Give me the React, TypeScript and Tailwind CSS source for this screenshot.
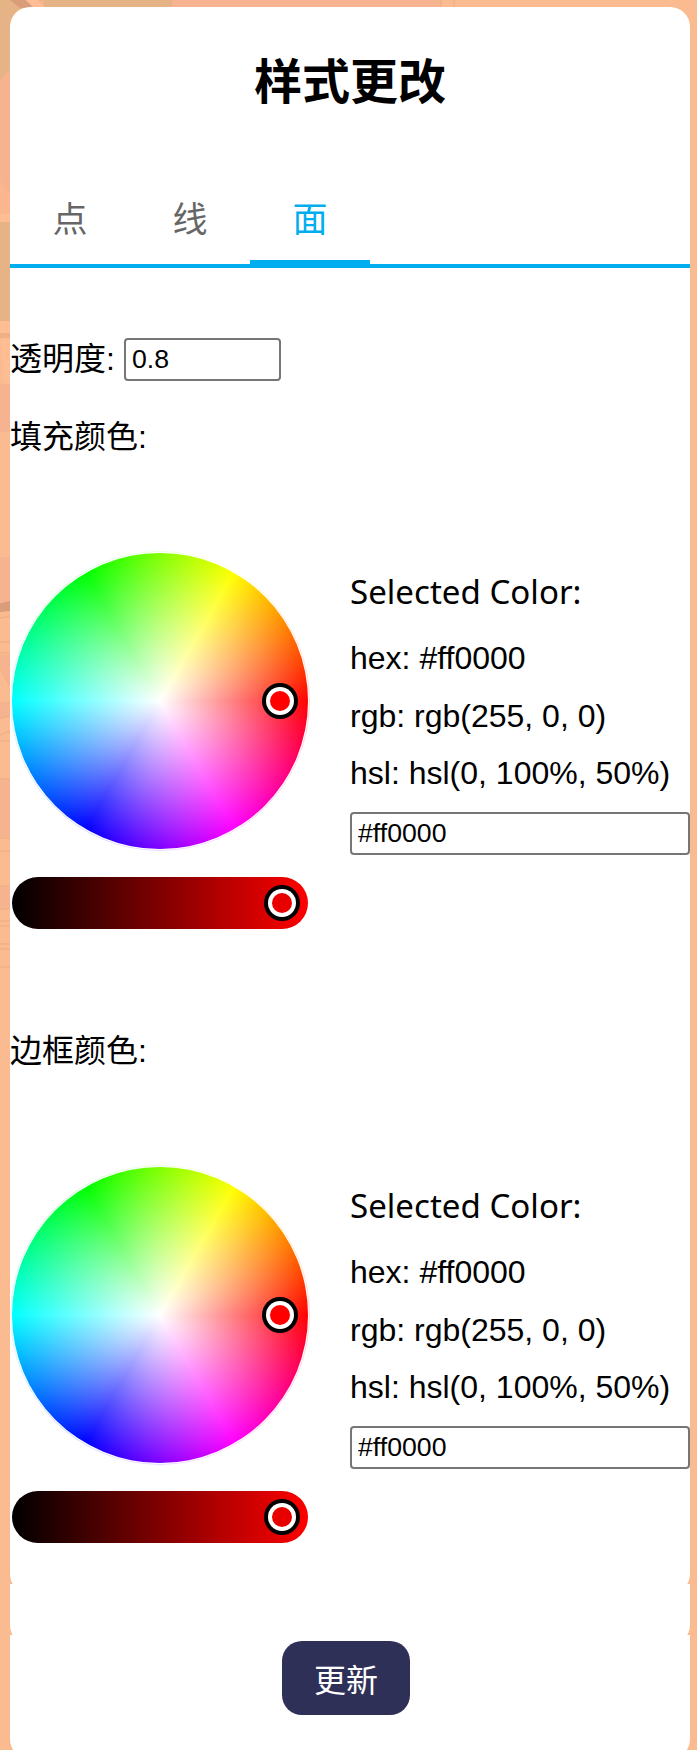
import React from "react";

const cjk = "font-['Liberation_Sans','Noto_Sans_CJK_SC',sans-serif]";

function Backdrop() {
  return (
    <svg className="absolute inset-0" width="697" height="1750" viewBox="0 0 697 1750">
      <rect width="697" height="1750" fill="#fbbb91" />
      <path d="M0 0H440V7H0Z" fill="#f5b38f" />
      <path d="M44 0H172V7H44Z" fill="#e6b386" />
      <path d="M0 0H10L34 8L10 24V80L0 81Z" fill="#e6b386" />
      <path d="M10 0H25L34 8H20Z" fill="#d99d7c" />
      <path d="M27 0H37L46 8H34Z" fill="#ffbd94" />
      <path d="M0 80L10 70V214H0Z" fill="#f5b38f" />
      <path d="M0 180L10 195V214H0Z" fill="#fbb68f" />
      <rect y="214" width="10" height="8" fill="#ffbd94" />
      <path d="M0 222H10V279H0Z" fill="#e6b386" />
      <path d="M0 279H10V321H0Z" fill="#e6b386" />
      <rect y="321" width="10" height="12" fill="#ffbd94" />
      <rect y="333" width="10" height="5" fill="#efb088" />
      <path d="M1 339H10V383L3 381Z" fill="#ffbd94" />
      <rect y="384" width="10" height="48" fill="#f5b38f" />
      <rect y="557" width="10" height="45" fill="#f5b38f" />
      <path d="M0 603L10 601V611L0 612Z" fill="#d99d7c" />
      <path d="M0 655H10V684L0 667Z" fill="#f5b38f" />
      <path d="M0 704H10V716L0 719Z" fill="#f5b38f" />
      <rect y="779" width="10" height="58" fill="#f5b38f" />
      <rect y="886" width="10" height="23" fill="#f5b38f" />
      <path
        d="M0 618L10 616M0 642H10M0 653H10M0 668L10 686M0 703H10M0 718L10 716M0 735L10 731M0 741H10M0 779H10M0 838H10M0 851H10M0 886H10M0 909H10M0 921H10M0 926H10M0 944H10M0 949H10M0 967H10M441 0V7M454 0V7"
        stroke="#efb088"
        strokeWidth="1.5"
      />
    </svg>
  );
}

function Handle({ fill }: { fill: string }) {
  return (
    <svg width="36" height="36" viewBox="0 0 36 36">
      <circle cx="18" cy="18" r="18" fill="#000" />
      <circle cx="18" cy="18" r="14" fill="#fff" />
      <circle cx="18" cy="18" r="10" fill={fill} />
    </svg>
  );
}

function ColorPicker({ label }: { label: string }) {
  return (
    <section className="h-[614px]">
      <div className="h-[48px] pt-[2px] text-[32px] leading-[48px]">{label}</div>
      <div className="flex pt-[92px]">
        <div className="w-[340px] shrink-0">
          <div className="relative h-[300px] w-[300px] rounded-full bg-[conic-gradient(from_90deg,#ffd9d9,#ffd9ff,#d9d9ff,#d9ffff,#d9ffd9,#ffffd9,#ffd9d9)] p-px">
            <div className="rounded-full bg-white p-px">
              <div className="h-[296px] w-[296px] rounded-full bg-[radial-gradient(circle_closest-side,#fff,transparent),conic-gradient(from_90deg,red,magenta,blue,aqua,lime,yellow,red)]" />
            </div>
            <div className="absolute top-[132px] left-[252px]">
              <Handle fill="#ff0000" />
            </div>
          </div>
          <div className="relative mt-[26px] ml-[2px] h-[52px] w-[296px] rounded-full bg-[linear-gradient(to_right,#000,#f00)]">
            <div className="absolute top-[8px] left-[252px]">
              <Handle fill="#e80000" />
            </div>
          </div>
        </div>
        <div className="w-[340px] pt-[12px]">
          <div className="h-[58px] pt-[5px] font-['Noto_Sans',sans-serif] text-[33.1px] leading-[48px] whitespace-nowrap">
            Selected Color:
          </div>
          <div className="pt-[9px] text-[32px] leading-[57.6px] whitespace-nowrap">
            <div>hex: #ff0000</div>
            <div>rgb: rgb(255, 0, 0)</div>
            <div>hsl: hsl(0, 100%, 50%)</div>
          </div>
          <input
            className="mt-[9px] block h-[43px] w-[340px] rounded-[4px] border-2 border-[#767676] bg-white px-[6px] text-[26.67px] text-black"
            defaultValue="#ff0000"
          />
        </div>
      </div>
    </section>
  );
}

export default function App() {
  const tabs = ["点", "线", "面"];
  return (
    <div className={`relative h-[1750px] w-[697px] overflow-hidden text-black ${cjk}`}>
      <Backdrop />
      <main className="relative flex flex-col pt-[7px] pr-[7px] pl-[10px]">
        <div className="h-[1587px] rounded-[20px] bg-white">
          <h1 className="pt-[40px] text-center text-[48px] leading-[72px] font-bold">样式更改</h1>
          <nav className="mt-[56px] flex h-[93px] items-stretch border-b-4 border-[#00aeef]">
            {tabs.map((t, i) => (
              <div
                key={t}
                className={`flex w-[120px] justify-center pt-[18px] text-[35px] leading-[54px] ${
                  i === 2 ? "border-b-4 border-[#00aeef] text-[#00aeef]" : "text-[#666]"
                }`}
              >
                {t}
              </div>
            ))}
          </nav>
          <div className="mt-[70px] flex h-[43px] items-center">
            <label className="w-[114px] text-[32px] leading-[41px] whitespace-nowrap">透明度:</label>
            <input
              className="h-[43px] w-[157px] rounded-[4px] border-2 border-[#767676] bg-white px-[6px] text-[26.67px] text-black"
              defaultValue="0.8"
            />
          </div>
          <div className="pt-[30px]">
            <ColorPicker label="填充颜色:" />
            <ColorPicker label="边框颜色:" />
          </div>
        </div>
        <div className="relative -mt-[10px] h-[61px] rounded-b-[20px] bg-white" />
        <div className="relative -mt-[10px] h-[124px] rounded-b-[20px] bg-white pt-[6px] pr-[8px]">
          <button className="mx-auto block h-[74px] w-[128px] rounded-[20px] bg-[#2e3058] pt-[5px] text-[32px] text-white">
            更新
          </button>
        </div>
      </main>
    </div>
  );
}
